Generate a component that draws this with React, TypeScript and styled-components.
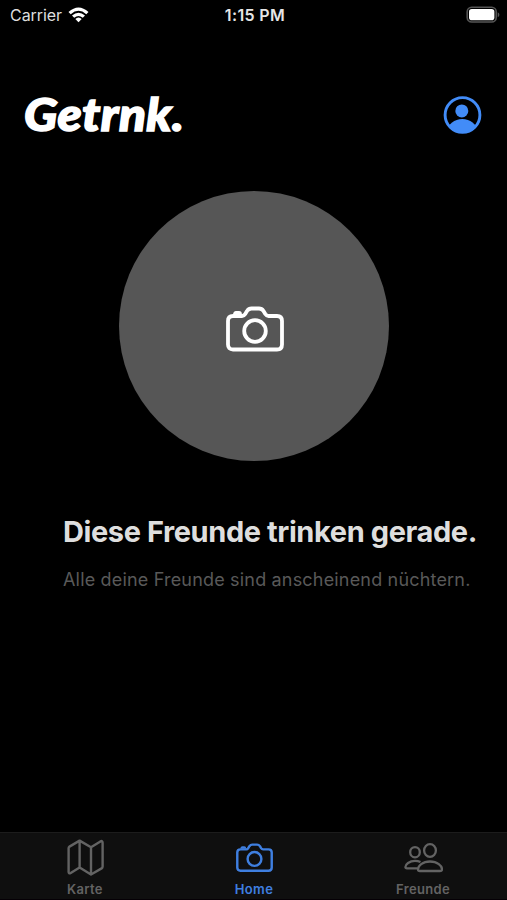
import React from "react";
import styled, { createGlobalStyle } from "styled-components";

const GlobalStyle = createGlobalStyle`
  * { box-sizing: border-box; }
  html, body { margin: 0; background: #000; overflow: hidden; }
  body { font-family: Inter, "Liberation Sans", sans-serif; }
`;

const Screen = styled.div`
  display: flex;
  flex-direction: column;
  width: 100%;
  height: 900px;
  background: #000;
  overflow: hidden;
`;

const StatusBar = styled.header`
  display: grid;
  grid-template-columns: 1fr auto 1fr;
  align-items: center;
  height: 30px;
  padding: 0 7px 0 10px;
  color: #dedede;
  font-size: 16px;
  line-height: 20px;
  flex: none;
`;

const Carrier = styled.div`
  display: flex;
  align-items: center;
  gap: 6px;
  letter-spacing: -0.05px;
`;

const Time = styled.time`
  font-weight: 600;
  letter-spacing: 0.35px;
  color: #e6e6e6;
`;

const Battery = styled.div`
  display: flex;
  justify-content: flex-end;
`;

const TitleRow = styled.div`
  display: flex;
  align-items: center;
  justify-content: space-between;
  height: 60px;
  margin-top: 55px;
  padding: 0 25px 0 24px;
  flex: none;
`;

const Logo = styled.h1`
  margin: -2px 0 0;
  font: italic 900 46px/56px Lato, sans-serif;
  letter-spacing: 0.4px;
  -webkit-text-stroke: 1.5px #fff;
  color: #fff;
  transform: scaleX(1.075);
  transform-origin: left center;
`;

const ProfileButton = styled.button`
  display: flex;
  margin-top: -1px;
  padding: 0;
  border: 0;
  background: none;
`;

const CaptureButton = styled.button`
  display: flex;
  align-items: center;
  justify-content: center;
  align-self: center;
  width: 270px;
  height: 270px;
  margin: 46px 0 0 1px;
  padding: 5px 0 0 1px;
  border: 0;
  border-radius: 50%;
  background: #565656;
  color: #fff;
  flex: none;
`;

const Friends = styled.section`
  flex: 1;
  padding: 53px 0 0 63px;
  white-space: nowrap;
`;

const Heading = styled.h2`
  margin: 0;
  font-size: 29px;
  line-height: 36px;
  font-weight: 700;
  letter-spacing: -0.41px;
  color: #dedede;
`;

const Note = styled.p`
  margin: 18px 0 0;
  font-size: 18px;
  line-height: 24px;
  letter-spacing: 0.18px;
  color: #595959;
`;

const TabBar = styled.nav`
  display: grid;
  grid-template-columns: repeat(3, 1fr);
  height: 68px;
  border-top: 1px solid #1c1c1c;
  border-bottom: 1px solid #050005;
  background: #0f0f0f;
  flex: none;
`;

const Tab = styled.button<{ $active?: boolean }>`
  display: flex;
  flex-direction: column;
  align-items: center;
  justify-content: flex-start;
  padding: 4px 0 0 1px;
  border: 0;
  background: none;
  font: 600 13px/16px Inter, sans-serif;
  letter-spacing: 0.32px;
  color: ${({ $active }) => ($active ? "#3f7fe0" : "#636363")};
`;

const TabIcon = styled.span`
  display: flex;
  align-items: center;
  height: 41px;
  margin-bottom: 3px;
`;

const CameraIcon = ({ width, stroke }: { width: number; stroke: number }) => (
  <svg width={width} height={(width * 46) / 58} viewBox="0 0 58 46" fill="none" stroke="currentColor" strokeWidth={stroke} strokeLinejoin="round">
    <path d="M7 10H16Q18 10 19.2 8L21 5Q22.8 2.5 25.5 2.5H33Q35.8 2.5 37.5 5L39.3 8Q40.6 10 42.5 10H51Q56 10 56 15V38.5Q56 43.5 51 43.5H7Q2 43.5 2 38.5V15Q2 10 7 10Z" />
    <circle cx="29" cy="25" r="10.8" />
    <path d="M9 9V8Q9 7 10 7H13Q14 7 14 8V9" />
  </svg>
);

const App = () => (
  <>
    <GlobalStyle />
    <Screen>
      <StatusBar>
        <Carrier>
          Carrier
          <svg width="21" height="16" viewBox="0 0 21 16">
            <path d="M0.5 5Q10.5 -4 20.5 5L18.3 7.2Q10.5 0.4 2.7 7.2Z" fill="#fff" />
            <path d="M4 8.5Q10.5 2.8 17 8.5L14.8 10.7Q10.5 7.2 6.2 10.7Z" fill="#fff" />
            <path d="M7.3 12Q10.5 9 13.7 12L10.5 15.2Z" fill="#fff" />
          </svg>
        </Carrier>
        <Time>1:15 PM</Time>
        <Battery>
          <svg width="34" height="18" viewBox="0 0 34 18">
            <rect x="1.2" y="1.2" width="29" height="14.8" rx="4.5" fill="none" stroke="#555" strokeWidth="1.6" />
            <rect x="3" y="3" width="25.4" height="11.2" rx="2.8" fill="#fff" />
            <path d="M31.7 6.2Q33.4 7 33.4 8.7T31.7 11.2Z" fill="#555" />
          </svg>
        </Battery>
      </StatusBar>
      <TitleRow>
        <Logo>Getrnk.</Logo>
        <ProfileButton aria-label="Profil">
          <svg width="39" height="38" viewBox="0 0 39 38">
            <defs>
              <clipPath id="face"><circle cx="19.5" cy="19" r="17" /></clipPath>
            </defs>
            <circle cx="19.5" cy="19" r="17.4" fill="none" stroke="#428cf8" strokeWidth="2.9" />
            <g clipPath="url(#face)" fill="#428cf8">
              <circle cx="18.8" cy="14.9" r="6.5" />
              <ellipse cx="19.3" cy="35" rx="14.5" ry="12" />
            </g>
          </svg>
        </ProfileButton>
      </TitleRow>
      <CaptureButton aria-label="Kamera">
        <CameraIcon width={58} stroke={3.8} />
      </CaptureButton>
      <Friends>
        <Heading>Diese Freunde trinken gerade.</Heading>
        <Note>Alle deine Freunde sind anscheinend nüchtern.</Note>
      </Friends>
      <TabBar>
        <Tab>
          <TabIcon>
            <svg width="37" height="37" viewBox="0 0 37 37" fill="none" stroke="currentColor" strokeWidth="2.4" strokeLinejoin="round">
              <path d="M1.6 9.3Q1.6 8.2 2.5 7.6L12.6 1.6L24 8.3L33.4 2.4Q35.6 1.3 35.6 3.7V27.5Q35.6 28.7 34.6 29.4L24 35.5L12.6 28.5L3.7 34Q1.6 35.2 1.6 32.8ZM12.6 1.6V28.5M24 8.3V35.5" />
            </svg>
          </TabIcon>
          Karte
        </Tab>
        <Tab $active>
          <TabIcon><CameraIcon width={37} stroke={3.8} /></TabIcon>
          Home
        </Tab>
        <Tab>
          <TabIcon>
            <svg width="39" height="30" viewBox="0 0 39 30" fill="none" stroke="currentColor" strokeWidth="2.3" strokeLinejoin="round">
              <ellipse cx="11" cy="9.2" rx="4.8" ry="5.1" />
              <ellipse cx="26" cy="7.5" rx="5.9" ry="6.3" />
              <path d="M16.5 19Q14 17.8 11 17.8C5.3 17.8 1.4 21.5 1.4 24Q1.4 25.3 3 25.3H13.5" />
              <path d="M26 18.5C18.5 18.5 14 23 14 26.4Q14 28 16 28H36Q38 28 38 26.4C38 23 33.5 18.5 26 18.5Z" />
            </svg>
          </TabIcon>
          Freunde
        </Tab>
      </TabBar>
    </Screen>
  </>
);

export default App;
